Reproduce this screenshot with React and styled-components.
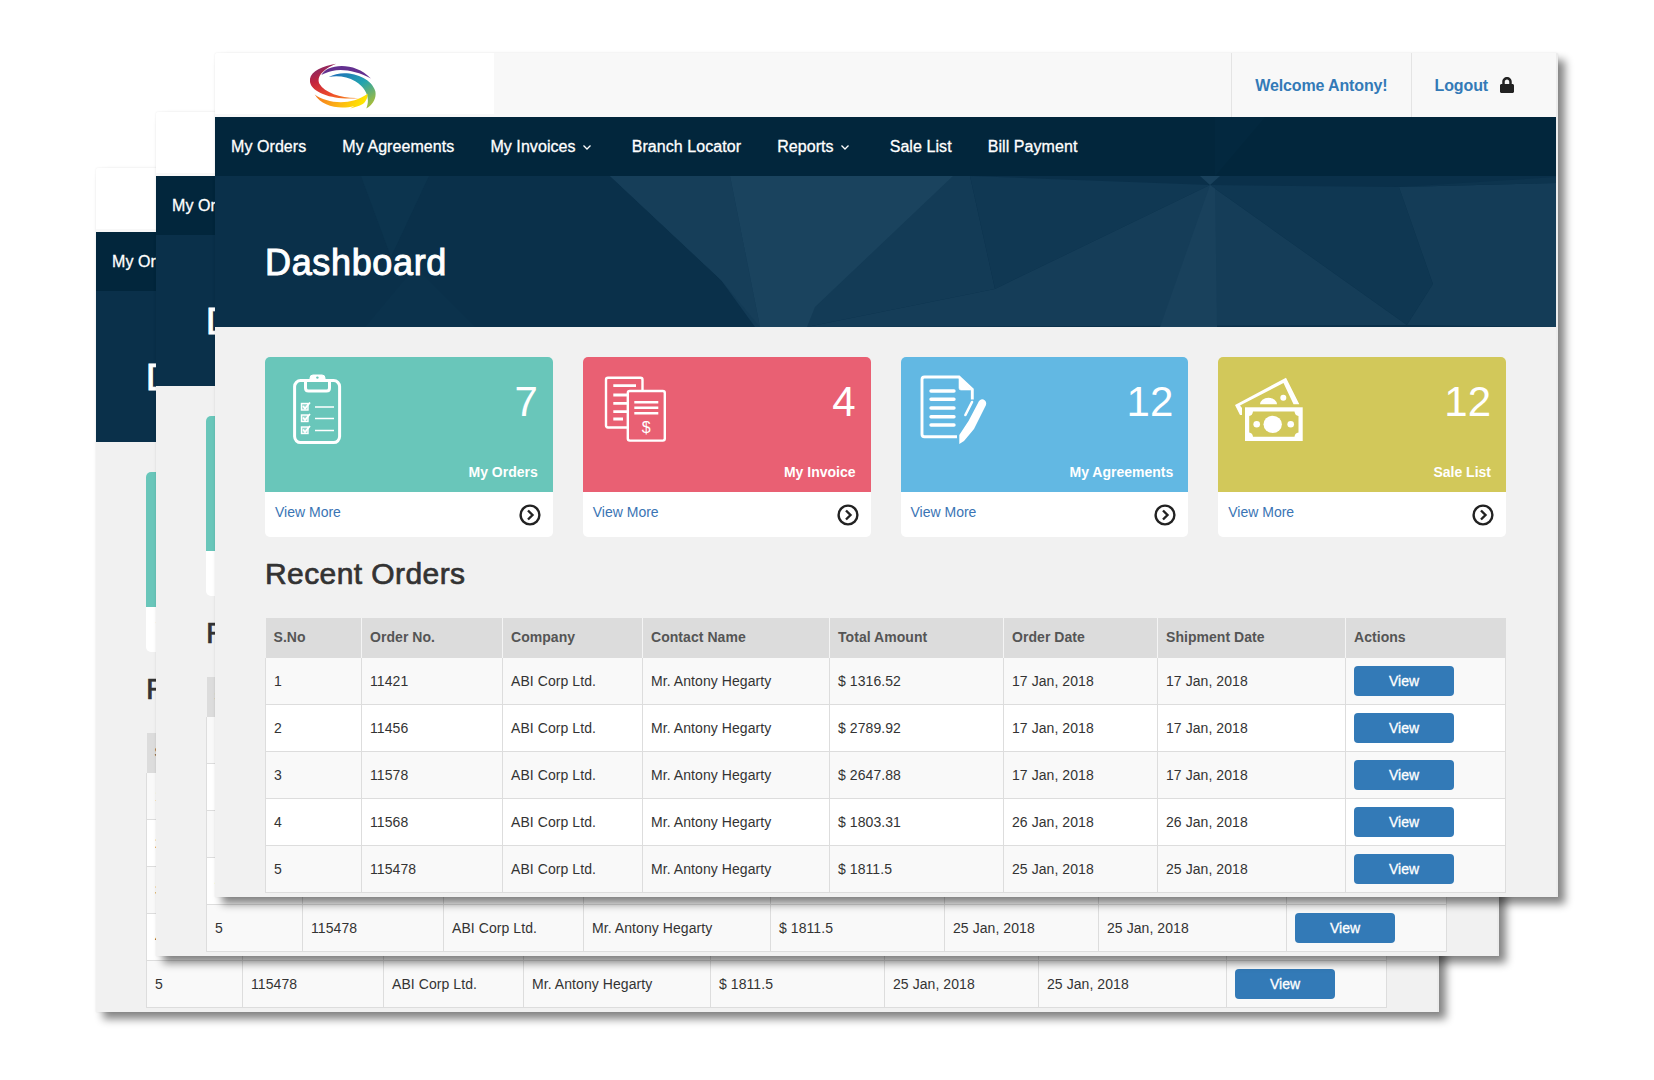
import React from 'react';
import styled, { createGlobalStyle } from 'styled-components';
import { FaLock } from 'react-icons/fa';

const GlobalStyle = createGlobalStyle`
  html, body {
    margin: 0;
    padding: 0;
    background: #fff;
    font-family: "Liberation Sans", Arial, sans-serif;
    color: #333;
  }
`;

const Stage = styled.div`
  position: relative;
  width: 1654px;
  height: 1080px;
  overflow: hidden;
  background: #fff;
`;

const Window = styled.div`
  position: absolute;
  left: ${props => props.$x}px;
  top: ${props => props.$y}px;
  box-sizing: border-box;
  width: 1343px;
  height: 844px;
  overflow: hidden;
  background: #f1f1f1;
  border-right: 2px solid #ececec;
  border-radius: 2px 2px 0 0;
  box-shadow: 7px 7px 8px rgba(0, 0, 0, 0.48), 0 0 2px rgba(0, 0, 0, 0.1);
`;

const Header = styled.header`
  display: flex;
  justify-content: space-between;
  height: 64px;
  background: #f8f8f8;
`;

const LogoPanel = styled.div`
  width: 279px;
  height: 61px;
  padding: 10px 0 0 95px;
  box-sizing: border-box;
  background: #fff;
`;

const HeaderActions = styled.div`
  display: flex;
`;

const HeaderCell = styled.a`
  display: flex;
  align-items: center;
  gap: 11px;
  padding: ${props => (props.$last ? '2px 41px 0 23px' : '2px 23px 0')};
  border-left: 1px solid #e4e4e4;
  color: #337ab7;
  font-size: 16px;
  font-weight: 700;
  letter-spacing: -0.13px;
  svg {
    color: #222;
    font-size: 16px;
    margin-top: -2px;
  }
`;

const Banner = styled.div`
  position: relative;
  height: 210px;
  background: #0a304a;
  color: #fff;
`;

const BannerTexture = styled.svg`
  position: absolute;
  left: 0;
  top: 0;
  width: 100%;
  height: 100%;
`;

const Nav = styled.nav`
  position: relative;
  display: flex;
  gap: 4px;
  height: 59px;
  background: rgba(0, 36, 56, 0.76);
`;

const NavItem = styled.a`
  display: flex;
  align-items: center;
  padding: 0 16px;
  font-size: 16px;
  letter-spacing: 0.07px;
  color: #fff;
  -webkit-text-stroke: 0.3px #fff;
`;

const Caret = styled.svg`
  width: 14px;
  height: 8px;
  margin: 3px 0 0 6px;
`;

const PageTitle = styled.h1`
  position: relative;
  margin: 0;
  padding: 66px 0 0 50px;
  font-size: 36px;
  line-height: 42px;
  font-weight: 400;
  letter-spacing: 0.65px;
  -webkit-text-stroke: 1px #fff;
`;

const Content = styled.main`
  padding: 30px 50px 0;
`;

const CardGrid = styled.div`
  display: grid;
  grid-template-columns: repeat(4, 1fr);
  gap: 30px;
`;

const Card = styled.div`
  height: 180px;
  overflow: hidden;
  background: #fff;
  border-radius: 5px;
`;

const CardBody = styled.div`
  display: flex;
  flex-direction: column;
  justify-content: space-between;
  box-sizing: border-box;
  height: 135px;
  padding: 15px 15px 10px 18px;
  background: ${props => props.$color};
  color: #fff;
`;

const CardTop = styled.div`
  display: flex;
  justify-content: space-between;
  align-items: flex-start;
`;

const CardIcon = styled.svg`
  width: 72px;
  height: 74px;
  overflow: visible;
`;

const CardCount = styled.div`
  margin-top: 9px;
  font-size: 42px;
  line-height: 42px;
`;

const CardLabel = styled.div`
  text-align: right;
  font-size: 14px;
  line-height: 20px;
  font-weight: 700;
`;

const CardFooter = styled.div`
  display: flex;
  justify-content: space-between;
  padding: 10px 12px 0 10px;
`;

const MoreLink = styled.a`
  font-size: 14px;
  line-height: 20px;
  color: #3a74b4;
`;

const MoreIcon = styled.svg`
  width: 22px;
  height: 22px;
  margin-top: 2px;
`;

const SectionTitle = styled.h2`
  margin: 0;
  padding: 19px 0 27px;
  font-size: 30px;
  line-height: 35px;
  font-weight: 400;
  letter-spacing: 0.42px;
  color: #333;
  -webkit-text-stroke: 0.7px #333;
`;

const Table = styled.table`
  width: 1240px;
  table-layout: fixed;
  border-collapse: collapse;
  font-size: 14px;
`;

const HeadCell = styled.th`
  width: ${props => props.$width}px;
  height: 40px;
  padding: 0 8px 2px;
  box-sizing: border-box;
  background: #dcdcdc;
  border-left: 1px solid #f4f4f4;
  color: #555;
  font-weight: 700;
  letter-spacing: 0.05px;
  text-align: left;
  &:first-child {
    border-left: none;
  }
`;

const Row = styled.tr`
  background: ${props => (props.$odd ? '#f9f9f9' : '#fff')};
`;

const Cell = styled.td`
  height: 47px;
  padding: 0 8px;
  box-sizing: border-box;
  border: 1px solid #ddd;
  border-top: none;
  color: #333;
  letter-spacing: 0.07px;
  ${Row}:first-child & {
    height: 46px;
  }
`;

const ViewButton = styled.button`
  display: block;
  width: 100px;
  height: 30px;
  padding: 0;
  border: none;
  border-radius: 4px;
  background: #337ab7;
  color: #fff;
  font-family: inherit;
  font-size: 14px;
  -webkit-text-stroke: 0.3px #fff;
`;

const columns = [
  { title: 'S.No', width: 96 },
  { title: 'Order No.', width: 141 },
  { title: 'Company', width: 140 },
  { title: 'Contact Name', width: 187 },
  { title: 'Total Amount', width: 174 },
  { title: 'Order Date', width: 154 },
  { title: 'Shipment Date', width: 188 },
  { title: 'Actions', width: 160 },
];

const orders = [
  ['1', '11421', '$ 1316.52', '17 Jan, 2018'],
  ['2', '11456', '$ 2789.92', '17 Jan, 2018'],
  ['3', '11578', '$ 2647.88', '17 Jan, 2018'],
  ['4', '11568', '$ 1803.31', '26 Jan, 2018'],
  ['5', '115478', '$ 1811.5', '25 Jan, 2018'],
];

const Logo = () => (
  <svg width="66" height="47" viewBox="0 0 197 140">
    <defs>
      <linearGradient id="swirlRed" x1="0.2" y1="0" x2="0.8" y2="1">
        <stop offset="0" stopColor="#7d2a6c" />
        <stop offset="0.35" stopColor="#c4243c" />
        <stop offset="0.75" stopColor="#ee4b2b" />
        <stop offset="1" stopColor="#f58220" />
      </linearGradient>
      <linearGradient id="swirlBlue" x1="0.1" y1="0" x2="0.9" y2="0.9">
        <stop offset="0" stopColor="#1f6fb8" />
        <stop offset="0.5" stopColor="#22a3b0" />
        <stop offset="1" stopColor="#a6bd3a" />
      </linearGradient>
      <linearGradient id="swirlYellow" x1="0" y1="0" x2="1" y2="0.2">
        <stop offset="0" stopColor="#f36f21" />
        <stop offset="0.6" stopColor="#fdb813" />
        <stop offset="1" stopColor="#ffe600" />
      </linearGradient>
    </defs>
    <path d="M78 2 C30 10 -8 30 1 60 C10 92 80 112 146 104 C95 106 45 90 28 62 C18 40 40 18 78 2 Z" fill="url(#swirlRed)" />
    <path d="M34 36 C48 4 130 -8 182 46 C140 24 96 16 66 24 C54 27 44 31 34 36 Z" fill="#63308f" />
    <path d="M56 42 C100 16 180 36 195 84 C199 104 188 124 168 136 C180 106 170 76 135 54 C112 42 84 36 56 42 Z" fill="url(#swirlBlue)" />
    <path d="M14 94 C50 120 120 130 172 92 C172 112 160 126 140 130 L120 136 L132 128 C90 140 35 130 14 94 Z" fill="url(#swirlYellow)" />
  </svg>
);

const ClipboardIcon = () => (
  <CardIcon viewBox="0 0 72 74" fill="none" stroke="#fff">
    <rect x="11.6" y="8.6" width="45" height="62" rx="6" strokeWidth="3" />
    <path d="M22.5 9 V16 Q22.5 19 25.5 19 H43.5 Q46.5 19 46.5 16 V9" strokeWidth="3" />
    <path d="M27 8 V6 Q27 3 30 3 H39 Q42 3 42 6 V8 Z" fill="#fff" strokeWidth="1" />
    <circle cx="34.4" cy="5.6" r="1.2" fill="#69c6ba" stroke="none" />
    {[31.5, 43, 55].map(y => (
      <g key={y}>
        <rect x="18.5" y={y} width="6.5" height="6.5" strokeWidth="1.4" fill="rgba(255,255,255,0.3)" />
        <path d={`M20 ${y + 2.5} L22 ${y + 5} L27 ${y - 1}`} strokeWidth="1.8" />
        <path d={`M32 ${y + 3.5} H51`} strokeWidth="1.6" />
      </g>
    ))}
  </CardIcon>
);

const InvoiceIcon = () => (
  <CardIcon viewBox="0 0 72 74" fill="none" stroke="#fff">
    <path d="M26 55.5 H7 Q5 55.5 5 53.5 V7.7 Q5 5.7 7 5.7 H39.5 Q41.5 5.7 41.5 7.7 V19" strokeWidth="2.4" />
    <rect x="26.8" y="19" width="37" height="49.6" rx="2" strokeWidth="2.4" />
    <path d="M12.3 13.7 H35 M12.3 23 H26 M12.3 31.3 H26 M12.3 39.7 H26 M12.3 47 H22" strokeWidth="2.8" />
    <path d="M33.3 30.3 H57.3 M33.3 35.8 H57.3 M33.3 41.3 H57.3" strokeWidth="2.6" />
    <text x="45.3" y="61" textAnchor="middle" fill="#fff" stroke="none" fontSize="16" fontFamily="Liberation Sans">$</text>
  </CardIcon>
);

const AgreementIcon = () => (
  <CardIcon viewBox="0 0 72 74" fill="none" stroke="#fff">
    <path d="M38 64.7 H5.5 Q3 64.7 3 62.2 V7.5 Q3 5 5.5 5 H40 L53.3 17.5 V27.5" strokeWidth="2.9" />
    <path d="M40 6 V16 Q40 18 42 18 L52 18 Z" fill="#fff" strokeWidth="0.6" />
    <path d="M12 19 H35 M12 27.3 H35 M12 36 H35 M12 44.7 H35 M12 53 H35" strokeWidth="3.4" strokeLinecap="round" />
    <path d="M53 30 L46.4 43" strokeWidth="2.6" strokeLinecap="round" />
    <path d="M59 31 Q61 26.5 64.5 27.5 Q68 29 67 33 L55 57 L45 69 L40.3 72 L40.3 63 L49.5 49 Z" fill="#fff" stroke="none" />
  </CardIcon>
);

const MoneyIcon = ({ color }) => (
  <CardIcon viewBox="0 0 72 74" fill="#fff">
    <path d="M-1 33 L50 5.7 L63.3 32.3 L57.5 32.3 L47.5 11 L4 33.6 L6 36 V43 H4 Z" />
    <path d="M24 32.3 A8.5 6.5 0 0 1 41 32.3 Z" />
    <circle cx="47.3" cy="25.7" r="3" />
    <rect x="9" y="35.3" width="57.7" height="33.7" />
    <path d="M17 39.5 H58.5 Q59 43.5 62.5 44 V60.5 Q59 61 58.5 64.8 H17 Q16.5 61 13.2 60.5 V44 Q16.5 43.5 17 39.5 Z" fill={color} />
    <ellipse cx="36.7" cy="52.3" rx="9.2" ry="8.6" />
    <circle cx="20.7" cy="52.3" r="3.3" />
    <circle cx="54.7" cy="52.3" r="3.3" />
  </CardIcon>
);

const cards = [
  { label: 'My Orders', count: 7, color: '#69c6ba', icon: <ClipboardIcon /> },
  { label: 'My Invoice', count: 4, color: '#e96073', icon: <InvoiceIcon /> },
  { label: 'My Agreements', count: 12, color: '#62b8e3', icon: <AgreementIcon /> },
  { label: 'Sale List', count: 12, color: '#d2c85a', icon: <MoneyIcon color="#d2c85a" /> },
];

const navItems = [
  { label: 'My Orders' },
  { label: 'My Agreements' },
  { label: 'My Invoices', caret: true },
  { label: 'Branch Locator' },
  { label: 'Reports', caret: true },
  { label: 'Sale List' },
  { label: 'Bill Payment' },
];

const Texture = () => (
  <BannerTexture viewBox="0 0 1341 210" preserveAspectRatio="none">
    <polygon points="146,59 214,59 176,140" fill="#0c344e" />
    <polygon points="150,210 200,150 260,210" fill="#0b324c" />
    <polygon points="395,59 738,59 755,59 780,172 592,210 540,210 506,163" fill="#133b56" />
    <polygon points="515,59 738,59 600,190 592,210 545,210" fill="#1a435e" />
    <polygon points="395,59 515,59 545,210 506,163" fill="#163e59" />
    <polygon points="755,59 995,68 780,172" fill="#103853" />
    <polygon points="995,68 1192,208 592,210 780,172" fill="#153d58" />
    <polygon points="995,68 1000,68 1002,210 945,210" fill="#19415c" />
    <polygon points="995,68 1184,70 1218,167 1192,208" fill="#0f3752" />
    <polygon points="1184,70 1341,66 1341,210 1192,208 1218,167" fill="#143c57" />
    <polygon points="1184,70 1341,60 1341,66" fill="#0d344e" />
    <polygon points="985,59 1005,59 995,68" fill="#19415c" />
    <polygon points="1000,0 1050,0 1000,59" fill="#0f3954" />
  </BannerTexture>
);

const DashboardWindow = ({ x, y }) => (
  <Window $x={x} $y={y}>
    <Header>
      <LogoPanel>
        <Logo />
      </LogoPanel>
      <HeaderActions>
        <HeaderCell>Welcome Antony!</HeaderCell>
        <HeaderCell $last>
          Logout
          <FaLock />
        </HeaderCell>
      </HeaderActions>
    </Header>
    <Banner>
      <Texture />
      <Nav>
        {navItems.map(item => (
          <NavItem key={item.label}>
            {item.label}
            {item.caret && (
              <Caret viewBox="0 0 14 8" fill="none" stroke="#fff" strokeWidth="1.3">
                <path d="M1.5 1.5 L5 5 L8.5 1.5" />
              </Caret>
            )}
          </NavItem>
        ))}
      </Nav>
      <PageTitle>Dashboard</PageTitle>
    </Banner>
    <Content>
      <CardGrid>
        {cards.map(card => (
          <Card key={card.label}>
            <CardBody $color={card.color}>
              <CardTop>
                {card.icon}
                <CardCount>{card.count}</CardCount>
              </CardTop>
              <CardLabel>{card.label}</CardLabel>
            </CardBody>
            <CardFooter>
              <MoreLink>View More</MoreLink>
              <MoreIcon viewBox="0 0 22 22" fill="none" stroke="#222" strokeWidth="2.4">
                <circle cx="11" cy="11" r="9.4" />
                <path d="M9 6.5 L13.5 11 L9 15.5" />
              </MoreIcon>
            </CardFooter>
          </Card>
        ))}
      </CardGrid>
      <SectionTitle>Recent Orders</SectionTitle>
      <Table>
        <thead>
          <tr>
            {columns.map(col => (
              <HeadCell key={col.title} $width={col.width}>{col.title}</HeadCell>
            ))}
          </tr>
        </thead>
        <tbody>
          {orders.map(([no, orderNo, total, date], i) => (
            <Row key={no} $odd={i % 2 === 0}>
              <Cell>{no}</Cell>
              <Cell>{orderNo}</Cell>
              <Cell>ABI Corp Ltd.</Cell>
              <Cell>Mr. Antony Hegarty</Cell>
              <Cell>{total}</Cell>
              <Cell>{date}</Cell>
              <Cell>{date}</Cell>
              <Cell><ViewButton>View</ViewButton></Cell>
            </Row>
          ))}
        </tbody>
      </Table>
    </Content>
  </Window>
);

const App = () => (
  <Stage>
    <GlobalStyle />
    <DashboardWindow x={96} y={168} />
    <DashboardWindow x={156} y={112} />
    <DashboardWindow x={215} y={53} />
  </Stage>
);

export default App;
